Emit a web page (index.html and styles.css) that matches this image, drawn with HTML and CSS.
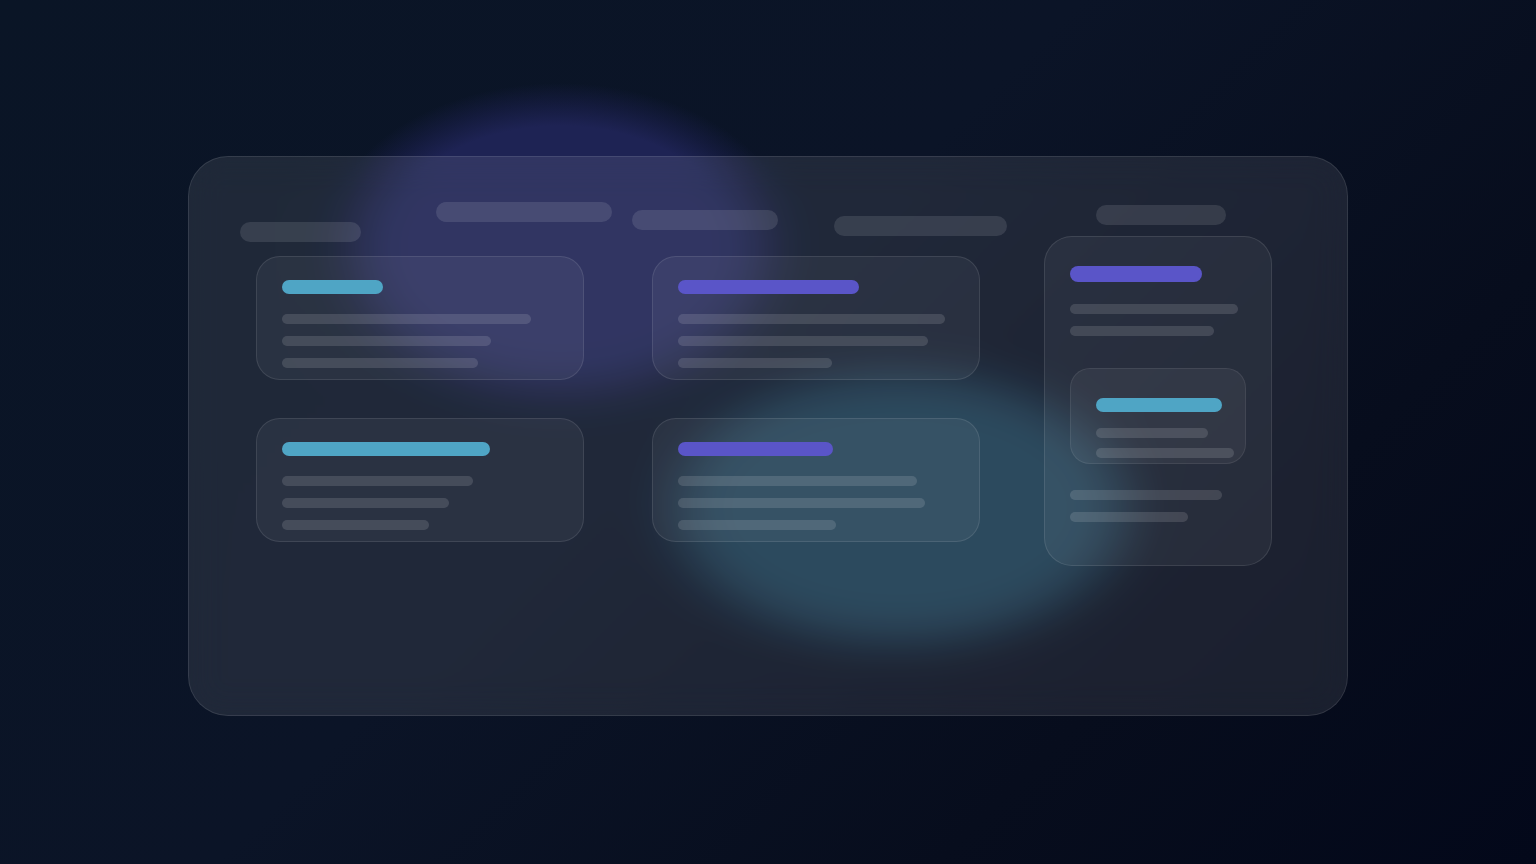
FILE: index.html
```html
<!DOCTYPE html>
<html lang="en">
<head>
<meta charset="utf-8">
<title>Glass dashboard skeleton</title>
<link rel="stylesheet" href="styles.css">
</head>
<body>
<div class="stage">
  <div class="panel">
    <div class="main">
      <div class="header">
        <span class="pill p1"></span>
        <span class="pill p2"></span>
        <span class="pill p3"></span>
        <span class="pill p4"></span>
      </div>
      <div class="cards">
        <div class="card">
          <span class="accent cyan" style="width:101px"></span>
          <span class="line first" style="width:249px"></span>
          <span class="line" style="width:209px"></span>
          <span class="line" style="width:196px"></span>
        </div>
        <div class="card">
          <span class="accent violet" style="width:181px"></span>
          <span class="line first" style="width:267px"></span>
          <span class="line" style="width:250px"></span>
          <span class="line" style="width:154px"></span>
        </div>
        <div class="card">
          <span class="accent cyan" style="width:208px"></span>
          <span class="line first" style="width:191px"></span>
          <span class="line" style="width:167px"></span>
          <span class="line" style="width:147px"></span>
        </div>
        <div class="card">
          <span class="accent violet" style="width:155px"></span>
          <span class="line first" style="width:239px"></span>
          <span class="line" style="width:247px"></span>
          <span class="line" style="width:158px"></span>
        </div>
      </div>
    </div>
    <div class="side">
      <span class="pill p5"></span>
      <div class="tall">
        <span class="accent violet tall-accent" style="width:132px"></span>
        <span class="line tall-first" style="width:168px"></span>
        <span class="line" style="width:144px"></span>
        <div class="inner">
          <span class="accent cyan" style="width:126px"></span>
          <span class="line inner-first" style="width:112px"></span>
          <span class="line inner-next" style="width:138px"></span>
        </div>
        <span class="line after-inner" style="width:152px"></span>
        <span class="line" style="width:118px"></span>
      </div>
    </div>
  </div>
</div>
</body>
</html>
```

FILE: styles.css
```css
* { box-sizing: border-box; }

html, body {
  margin: 0;
  padding: 0;
  width: 1536px;
  height: 864px;
  overflow: hidden;
  font-family: "Inter", "Liberation Sans", sans-serif;
}

body {
  background:
    radial-gradient(ellipse 238px 165px at 560px 248px, #1e2354 0%, #1e2354 74%, rgba(28, 32, 80, 0.5) 88%, rgba(24, 28, 70, 0) 100%),
    radial-gradient(ellipse 256px 152px at 900px 508px, #19394f 0%, #19394f 74%, rgba(24, 56, 78, 0.5) 88%, rgba(20, 50, 70, 0) 100%),
    linear-gradient(135deg, #0a1526 0%, #0b1427 45%, #070d1d 75%, #03081a 100%);
}

.stage {
  padding: 156px 0 0 188px;
  height: 864px;
}

.panel {
  width: 1160px;
  height: 560px;
  border-radius: 40px;
  border: 1px solid rgba(255, 255, 255, 0.1);
  background: rgba(255, 255, 255, 0.085);
  backdrop-filter: blur(18px);
  padding: 45px 0 0 51px;
  display: flex;
  align-items: flex-start;
}

.main {
  width: 767px;
  flex: none;
}

.header {
  display: flex;
  align-items: flex-start;
  height: 40px;
}

.pill {
  display: block;
  height: 20px;
  border-radius: 10px;
  background: rgba(255, 255, 255, 0.11);
  flex: none;
}

.p1 { width: 121px; margin-top: 20px; }
.p2 { width: 176px; margin-left: 75px; }
.p3 { width: 146px; margin-left: 20px; margin-top: 8px; }
.p4 { width: 173px; margin-left: 56px; margin-top: 14px; }

.cards {
  margin: 14px 0 0 16px;
  display: grid;
  grid-template-columns: 328px 328px;
  column-gap: 68px;
  row-gap: 38px;
}

.card {
  height: 124px;
  border-radius: 24px;
  border: 1px solid rgba(255, 255, 255, 0.1);
  background: rgba(255, 255, 255, 0.05);
  padding: 23px 25px;
  display: flex;
  flex-direction: column;
  align-items: flex-start;
}

.accent {
  display: block;
  height: 14px;
  border-radius: 7px;
  flex: none;
}

.cyan { background: #4fa5c5; }
.violet { background: #5a55c8; }

.line {
  display: block;
  height: 10px;
  border-radius: 5px;
  background: rgba(255, 255, 255, 0.13);
  margin-top: 12px;
  flex: none;
}

.line.first { margin-top: 20px; }

.side {
  margin-left: 37px;
  padding-top: 3px;
  width: 228px;
  flex: none;
}

.p5 { width: 130px; margin-left: 52px; }

.tall {
  margin-top: 11px;
  width: 228px;
  height: 330px;
  border-radius: 28px;
  border: 1px solid rgba(255, 255, 255, 0.1);
  background: rgba(255, 255, 255, 0.05);
  padding: 29px 25px;
  display: flex;
  flex-direction: column;
  align-items: flex-start;
}

.tall-accent { height: 16px; border-radius: 8px; }
.line.tall-first { margin-top: 22px; }

.inner {
  margin-top: 32px;
  width: 176px;
  height: 96px;
  border-radius: 20px;
  border: 1px solid rgba(255, 255, 255, 0.08);
  background: rgba(255, 255, 255, 0.05);
  padding: 29px 25px 0;
  display: flex;
  flex-direction: column;
  align-items: flex-start;
  flex: none;
}

.line.inner-first { margin-top: 16px; }
.line.inner-next { margin-top: 10px; }
.line.after-inner { margin-top: 26px; }
```
